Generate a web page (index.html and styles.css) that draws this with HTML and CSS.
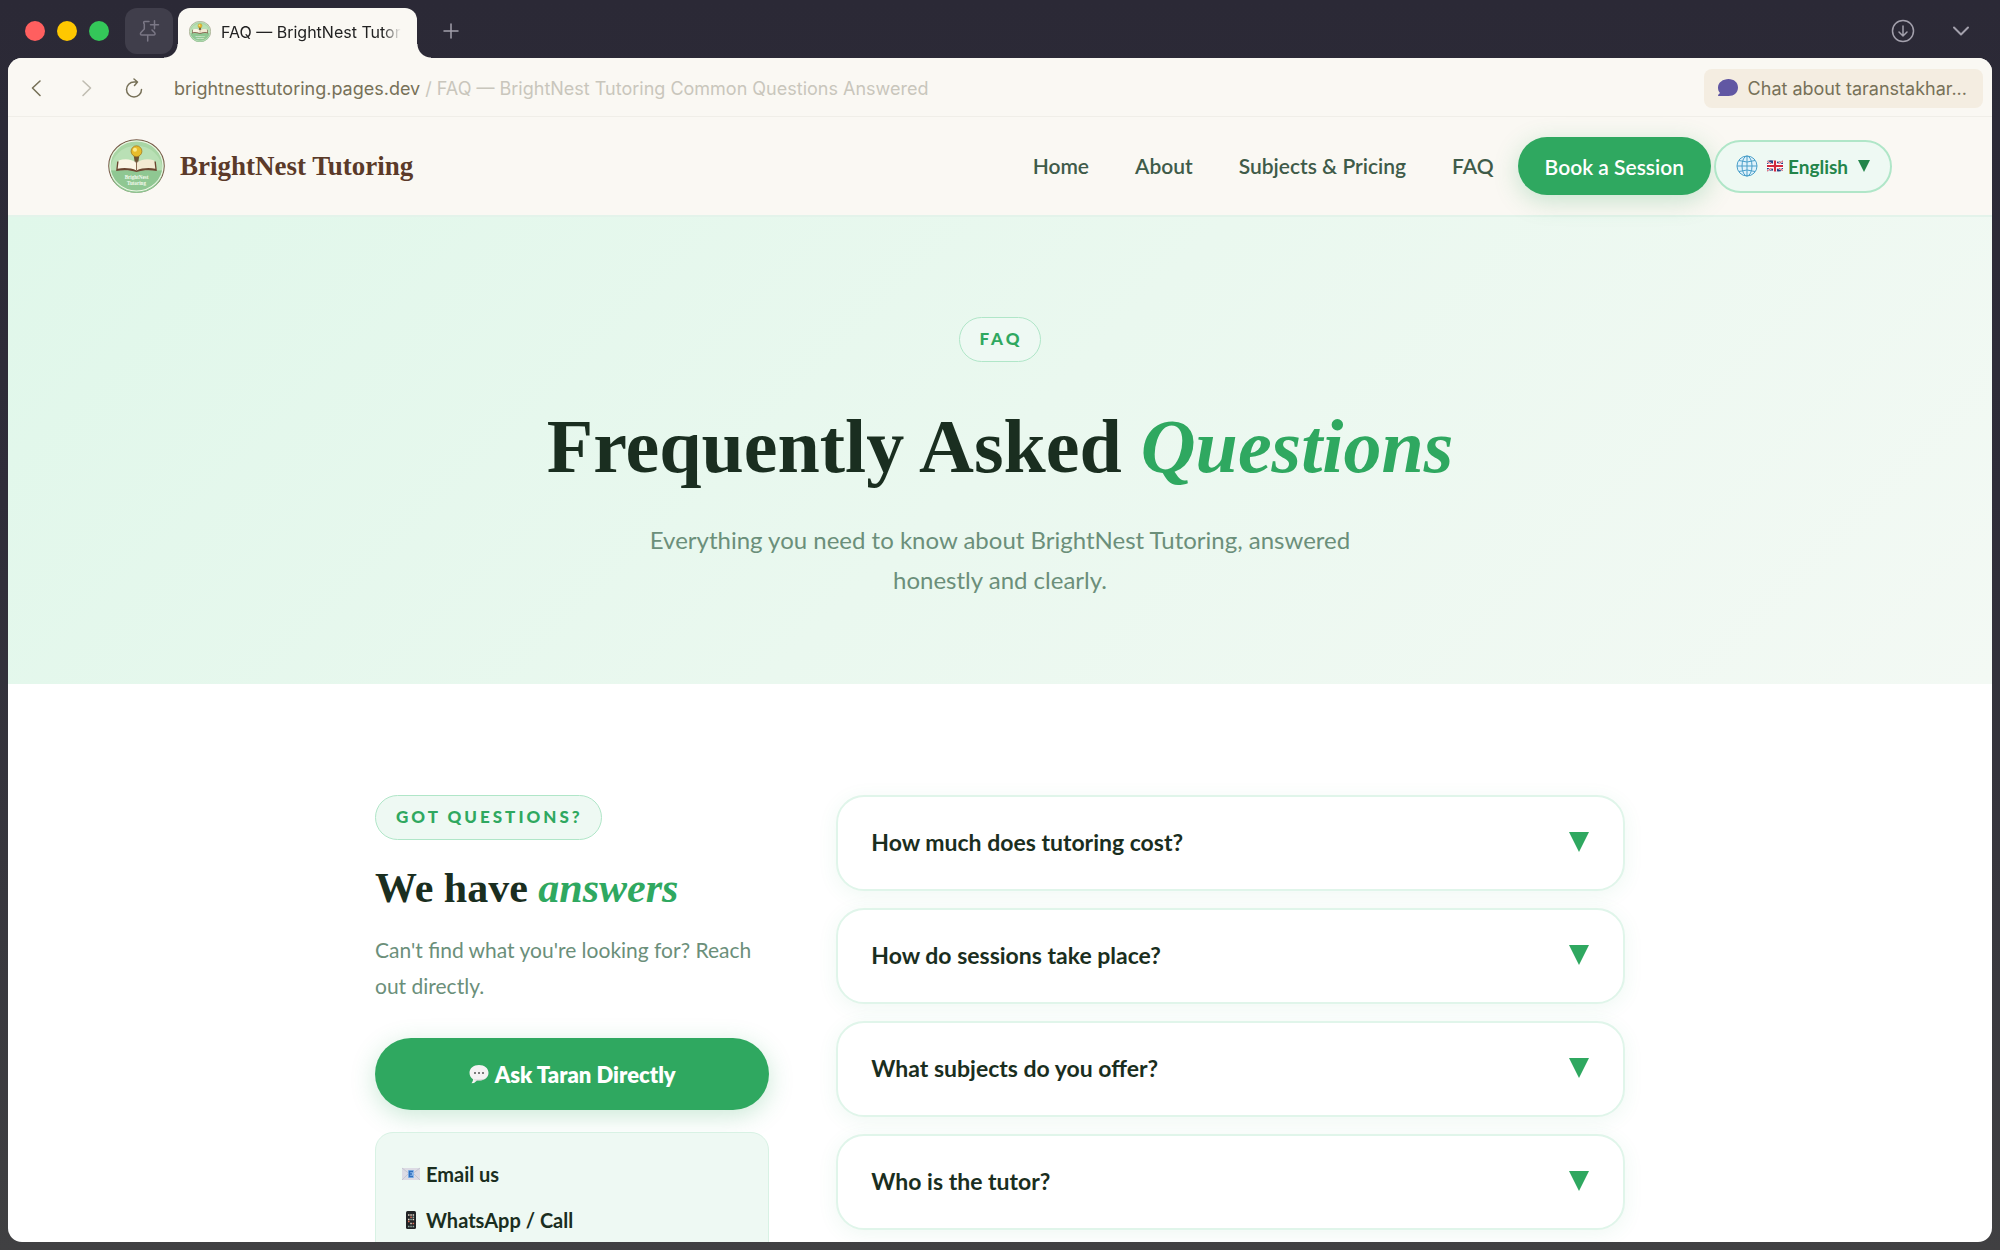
FILE: index.html
```html
<!DOCTYPE html>
<html lang="en">
<head>
    <meta charset="UTF-8">
    <meta name="viewport" content="width=device-width, initial-scale=1.0">
    <title>FAQ — BrightNest Tutoring Common Questions Answered</title>
    <link rel="stylesheet" href="styles.css">
</head>
<body>
    <!-- shared logo drawing -->
    <svg class="defs" aria-hidden="true">
        <symbol id="logo" viewBox="0 0 56 53">
            <ellipse cx="28" cy="26.500" rx="28" ry="26.500" fill="#fff"/>
            <ellipse cx="28" cy="26.500" rx="27.300" ry="25.800" fill="#a9d6a5" stroke="#7a5a48" stroke-width="1"/>
            <path d="M2.500 31a25.500 24.500 0 1 1 51 0z" fill="#b9e0b5"/>
            <path d="M2.500 31h51a25.500 22 0 0 1-51 0z" fill="#8fc792"/>
            <ellipse cx="28" cy="26.500" rx="26" ry="24.500" fill="none" stroke="#eef6e6" stroke-width="1"/>
            <path d="M9 22l-1 9.500c7-1.500 14-1 20 .8 6-1.800 13-2.300 20-.8L47 22z" fill="#6b4630"/>
            <path d="M10.500 21c6-2 13-1.500 17.500 2.500V31c-5-2.500-12-3-18.500-1.800z" fill="#fbf5e4"/>
            <path d="M45.500 21c-6-2-13-1.500-17.500 2.500V31c5-2.500 12-3 18.500-1.800z" fill="#f3ead2"/>
            <path d="M28 23.500V31" stroke="#8a6a50" stroke-width="1"/>
            <path d="M25 15h6l-1 6-2 2-2-2z" fill="#6e5334"/>
            <circle cx="28" cy="12" r="5.300" fill="#e8bd2c" stroke="#a57d1f" stroke-width=".8"/>
            <circle cx="26.500" cy="10.500" r="2" fill="#fbe98a"/>
            <text class="logo-text" x="28" y="39.500">BrightNest</text>
            <text class="logo-text" x="28" y="44.800">Tutoring</text>
        </symbol>
    </svg>

    <header class="tab-bar">
        <div class="lights">
            <button class="light red" aria-label="Close"></button>
            <button class="light yellow" aria-label="Minimize"></button>
            <button class="light green" aria-label="Zoom"></button>
        </div>
        <button class="pin-btn" aria-label="Pin tab">
            <svg width="22" height="22" viewBox="0 0 22 22" fill="none" stroke="#7a7785" stroke-width="1.500" stroke-linecap="round" stroke-linejoin="round">
                <path d="M11 1.500H7C5.300 1.500 5.300 3 6.300 4V9L3 12.500C2 13.800 2.300 15 4 15H15.500C17.200 15 17.500 13.800 16.500 12.500L14 10M9.700 15V21M16.500 .8v8M12.500 4.800h8"/>
            </svg>
        </button>
        <div class="tab">
            <svg class="favicon"><use href="#logo"/></svg>
            <span class="tab-title">FAQ — BrightNest Tutoring</span>
        </div>
        <button class="icon-btn new-tab" aria-label="New tab">
            <svg width="16" height="16" viewBox="0 0 16 16" fill="none" stroke="#a3a0ac" stroke-width="1.500" stroke-linecap="round"><path d="M8 1v14M1 8h14"/></svg>
        </button>
        <div class="tab-tools">
            <button class="icon-btn" aria-label="Downloads">
                <svg width="24" height="24" viewBox="0 0 24 24" fill="none" stroke="#a3a0ac" stroke-width="1.500" stroke-linecap="round" stroke-linejoin="round"><circle cx="12" cy="12" r="10.500"/><path d="M12 7v10M8 13l4 4 4-4"/></svg>
            </button>
            <button class="icon-btn" aria-label="All tabs">
                <svg width="18" height="12" viewBox="0 0 18 12" fill="none" stroke="#a3a0ac" stroke-width="2" stroke-linecap="round" stroke-linejoin="round"><path d="M2 2.500l7 7 7-7"/></svg>
            </button>
        </div>
    </header>

    <div class="window">
        <div class="toolbar">
            <div class="history">
                <button class="icon-btn" aria-label="Back">
                    <svg width="18" height="18" viewBox="0 0 18 18" fill="none" stroke="#777158" stroke-width="1.600" stroke-linecap="round" stroke-linejoin="round"><path d="M13 2L5.500 9l7.500 7.500"/></svg>
                </button>
                <button class="icon-btn" aria-label="Forward">
                    <svg width="18" height="18" viewBox="0 0 18 18" fill="none" stroke="#c0bdb2" stroke-width="1.600" stroke-linecap="round" stroke-linejoin="round"><path d="M7 2l7.500 7L7 16.500"/></svg>
                </button>
                <button class="icon-btn" aria-label="Reload">
                    <svg width="18" height="20" viewBox="0 0 18 20" fill="none" stroke="#777158" stroke-width="1.500" stroke-linecap="round" stroke-linejoin="round"><path d="M16.500 11.500A7.500 7.500 0 1 1 9 4h3M9 1l3.500 3L9.500 7.500"/></svg>
                </button>
            </div>
            <div class="address">brightnesttutoring.pages.dev <span class="address-title">/ FAQ — BrightNest Tutoring Common Questions Answered</span></div>
            <button class="chat-btn">
                <svg width="22" height="20" viewBox="0 0 22 20" fill="#6157a3"><path d="M11.500 1C17 1 21 4.500 21 9.500S17 18 11.500 18H2c-1.200 0-1.200-1-.5-1.600L3 15C1.500 13.500 1 11.500 1 9.500 1 4.500 6 1 11.500 1z"/></svg>
                Chat about taranstakhar...
            </button>
        </div>

        <nav class="navbar">
            <a class="brand" href="#">
                <svg class="brand-logo"><use href="#logo"/></svg>
                BrightNest Tutoring
            </a>
            <div class="nav-links">
                <a href="#">Home</a>
                <a href="#">About</a>
                <a href="#">Subjects &amp; Pricing</a>
                <a href="#">FAQ</a>
            </div>
            <a class="btn btn-nav" href="#">Book a Session</a>
            <div class="lang">
                <svg width="22" height="22" viewBox="0 0 22 22" fill="#dff2fb" stroke="#4a9fc9" stroke-width="1"><circle cx="11" cy="11" r="10"/><ellipse cx="11" cy="11" rx="5" ry="10" fill="none"/><path d="M11 1v20M1 11h20M3 5.500q8 3 16 0M3 16.500q8-3 16 0" fill="none"/></svg>
                <svg class="flag" width="16" height="12" viewBox="0 0 16 12"><path fill="#283c80" d="M0 1q4-1.500 8 0t8-.5v10q-4 1.500-8 .5t-8 .5z"/><path d="M0 1.500l16 9M0 11L16 1" stroke="#fff" stroke-width="2"/><path d="M0 1.500l16 9M0 11L16 1" stroke="#d2283c" stroke-width=".8"/><path d="M8 .5v11M0 6h16" stroke="#fff" stroke-width="4"/><path d="M8 .5v11M0 6h16" stroke="#d2283c" stroke-width="2.200"/></svg>
                <select aria-label="Language">
                    <option>English</option>
                </select>
                <svg width="12" height="12" viewBox="0 0 12 12" fill="#23854a"><path d="M0 0h12L6 12z"/></svg>
            </div>
        </nav>

        <section class="hero">
            <span class="badge">FAQ</span>
            <h1>Frequently Asked <em>Questions</em></h1>
            <p>Everything you need to know about BrightNest Tutoring, answered honestly and clearly.</p>
        </section>

        <main class="faq-section">
            <aside class="faq-side">
                <span class="badge">GOT QUESTIONS?</span>
                <h2>We have <em>answers</em></h2>
                <p>Can't find what you're looking for? Reach out directly.</p>
                <a class="btn btn-ask" href="#">
                    <svg width="20" height="20" viewBox="0 0 20 20"><path d="M10 1c5.500 0 9.500 3.200 9.500 7.800s-4 7.800-9.500 7.800q-1 0-2-.2-2 2.600-5.500 2.800 1.800-1.600 1.500-4C1.800 13.700.5 11.500.5 8.800.5 4.200 4.500 1 10 1z" fill="#f4f2f3"/><path d="M4 15.200q2.500 1.400 6 1.400 4 0 6.500-1.800-3 1-6.500 1-3.500 0-6-.6z" fill="#bdbabd"/><circle cx="6" cy="9" r="1" fill="#555"/><circle cx="10" cy="9" r="1" fill="#555"/><circle cx="14" cy="9" r="1" fill="#555"/></svg>
                    Ask Taran Directly
                </a>
                <div class="contact-card">
                    <a href="#">
                        <svg width="18" height="18" viewBox="0 0 18 18"><path d="M0 3h18v12H0z" fill="#dcdbe4"/><path d="M0 3l9 7 9-7M0 15l6-6M18 15l-6-6" fill="none" stroke="#bfc0cc" stroke-width=".8"/><path d="M6 5h6v8H6z" fill="#8fb9ea"/><path d="M11 6.500H7.500v5H11M7.500 9H10" fill="none" stroke="#2f6fbe" stroke-width="1.400"/></svg>
                        Email us
                    </a>
                    <a href="#">
                        <svg width="18" height="18" viewBox="0 0 18 18"><rect x="4" y="0" width="10" height="18" rx="1.500" fill="#222426"/><path d="M6 4h1.500M8.300 4h1.500M10.600 4h1.500M6 8.500h1.500M10.600 8.500h1.500M8.300 12.500h1.500" stroke="#e7dccb" stroke-width="1.500"/><path d="M8.300 6.300h1.500M6 10.500h1.500M10.600 12.500h1.500" stroke="#e2705a" stroke-width="1.500"/><path d="M8.300 8.500h1.500M10.600 6.300h1.500M6 15.500h1.500M8.300 15.500h1.500M10.600 15.500h1.500" stroke="#8fa9a0" stroke-width="1.500"/></svg>
                        WhatsApp / Call
                    </a>
                </div>
            </aside>
            <div class="faq-list">
                <button class="faq-item">How much does tutoring cost? <svg class="arrow" viewBox="0 0 20 20"><path d="M0 0h20L10 20z"/></svg></button>
                <button class="faq-item">How do sessions take place? <svg class="arrow" viewBox="0 0 20 20"><path d="M0 0h20L10 20z"/></svg></button>
                <button class="faq-item">What subjects do you offer? <svg class="arrow" viewBox="0 0 20 20"><path d="M0 0h20L10 20z"/></svg></button>
                <button class="faq-item">Who is the tutor? <svg class="arrow" viewBox="0 0 20 20"><path d="M0 0h20L10 20z"/></svg></button>
            </div>
        </main>
    </div>
</body>
</html>
```
FILE: styles.css
```css
* {
    box-sizing: border-box;
    margin: 0;
    padding: 0;
}

body {
    font-family: Lato, "Open Sans", sans-serif;
    height: 100vh;
    display: flex;
    flex-direction: column;
    background: linear-gradient(#2b2936, #2f2d39 40%, #404042);
    color: #1a2e20;
    overflow: hidden;
}

button {
    font: inherit;
    color: inherit;
    background: none;
    border: none;
    cursor: pointer;
}

a {
    color: inherit;
    text-decoration: none;
}

svg {
    flex-shrink: 0;
}

.defs {
    position: absolute;
    width: 0;
    height: 0;
}

.logo-text {
    font: bold 5px "Liberation Serif", serif;
    fill: #f4faef;
    text-anchor: middle;
}

/* browser tabs */
.tab-bar {
    display: flex;
    align-items: flex-start;
    height: 58px;
    padding: 8px 27px 0 25px;
    font-family: Inter, sans-serif;
}

.lights {
    display: flex;
    gap: 12px;
    padding-top: 13px;
    margin-right: 16px;
}

.light {
    width: 20px;
    height: 20px;
    border-radius: 50%;
}

.red { background-color: #ff5f5f; }
.yellow { background-color: #fec700; }
.green { background-color: #34c759; }

.pin-btn {
    display: flex;
    align-items: center;
    justify-content: center;
    width: 48px;
    height: 46px;
    margin-right: 5px;
    border-radius: 12px;
    background-color: #403e4b;
}

.tab {
    position: relative;
    display: flex;
    align-items: center;
    gap: 10px;
    width: 239px;
    height: 50px;
    padding: 0 16px 3px 11px;
    border-radius: 12px 12px 0 0;
    background-color: #faf8f3;
}

/* curved feet of the active tab */
.tab::before,
.tab::after {
    content: "";
    position: absolute;
    bottom: 0;
    width: 14px;
    height: 14px;
}

.tab::before {
    right: 100%;
    background: radial-gradient(circle at 0 0, transparent 13px, #faf8f3 14px);
}

.tab::after {
    left: 100%;
    background: radial-gradient(circle at 100% 0, transparent 13px, #faf8f3 14px);
}

.favicon {
    width: 22px;
    height: 21px;
}

.tab-title {
    flex: 1;
    overflow: hidden;
    white-space: nowrap;
    font-size: 16px;
    color: #222;
    mask-image: linear-gradient(90deg, #000 90%, transparent);
}

.icon-btn {
    display: flex;
    align-items: center;
    justify-content: center;
    min-width: 24px;
    height: 24px;
}

.new-tab {
    margin: 11px 0 0 22px;
}

.tab-tools {
    display: flex;
    gap: 34px;
    margin-left: auto;
    padding-top: 11px;
}

/* page window */
.window {
    flex: 1;
    min-height: 0;
    margin: 0 8px 8px;
    border-radius: 14px;
    background-color: #fff;
    overflow: hidden;
}

.toolbar {
    display: flex;
    align-items: center;
    height: 59px;
    padding: 2px 9px 0 16px;
    background-color: #faf8f3;
    border-bottom: 1px solid #f0eee8;
    font-family: Inter, sans-serif;
    font-size: 18px;
}

.history {
    display: flex;
    gap: 25px;
    margin-right: 28px;
}

.address {
    flex: 1;
    color: #777158;
    white-space: nowrap;
}

.address-title {
    color: #c9c6bc;
}

.chat-btn {
    display: flex;
    align-items: center;
    gap: 9px;
    height: 39px;
    padding: 0 16px 0 13px;
    border-radius: 8px;
    background-color: #f4ede1;
    color: #777158;
}

.navbar {
    display: flex;
    align-items: center;
    height: 100px;
    padding: 0 100px;
    background-color: #faf8f3;
    border-bottom: 2px solid #e3f3ea;
}

.brand {
    display: flex;
    align-items: center;
    gap: 15px;
    font-family: "Liberation Serif", serif;
    font-size: 27px;
    font-weight: 700;
    color: #5b3a29;
}

.brand-logo {
    width: 57px;
    height: 54px;
}

.nav-links {
    display: flex;
    gap: 46px;
    margin-left: auto;
    margin-right: 24px;
    font-size: 21px;
    font-weight: 600;
    line-height: 28px;
    color: #3f5b49;
}

.btn {
    display: flex;
    align-items: center;
    justify-content: center;
    border-radius: 40px;
    background-color: #2fa860;
    color: #fff;
    font-weight: 700;
    box-shadow: 0 6px 24px rgba(47, 168, 96, 0.25);
}

.btn-nav {
    height: 58px;
    padding: 0 27px;
    margin-right: 3px;
    font-size: 21px;
    font-weight: 600;
}

.lang {
    display: flex;
    align-items: center;
    height: 53px;
    padding: 0 20px;
    border: 2px solid #b0e6c8;
    border-radius: 27px;
    background-color: #eef9f3;
}

.flag {
    margin: 0 5px 0 9px;
}

.lang select {
    appearance: none;
    margin-right: 9px;
    border: none;
    background: none;
    font: 700 19px Lato, "Open Sans", sans-serif;
    color: #23854a;
}

.hero {
    display: flex;
    flex-direction: column;
    align-items: center;
    padding: 100px 20px 84px;
    background: linear-gradient(135deg, #e0f7ea, #eaf8ef 50%, #f3f9f4);
    text-align: center;
}

.badge {
    height: 45px;
    padding: 0 18px 0 20px;
    border: 1px solid #b0e6c8;
    border-radius: 24px;
    background-color: #eef9f3;
    color: #2fa860;
    font-size: 17px;
    font-weight: 900;
    line-height: 42px;
    letter-spacing: 3px;
}

h1,
h2 {
    font-family: "Liberation Serif", serif;
    font-weight: 700;
}

em {
    color: #2fa860;
}

h1 {
    margin: 42px 0 32px;
    font-size: 76px;
    line-height: 84px;
}

.hero p {
    max-width: 740px;
    font-size: 24px;
    line-height: 40px;
    color: #6b8f7a;
}

.faq-section {
    display: grid;
    grid-template-columns: 1fr 2fr;
    gap: 67px;
    max-width: 1250px;
    margin: 0 auto;
    padding: 111px 0;
}

.faq-side {
    display: flex;
    flex-direction: column;
    align-items: flex-start;
}

h2 {
    margin: 24px 0 20px;
    font-size: 42px;
    line-height: 48px;
}

.faq-side p {
    margin-bottom: 34px;
    font-size: 21px;
    line-height: 36px;
    color: #6b8f7a;
}

.btn-ask {
    gap: 6px;
    width: 100%;
    height: 72px;
    margin-bottom: 22px;
    font-size: 22px;
    font-weight: 800;
}

.contact-card {
    display: flex;
    flex-direction: column;
    gap: 18px;
    width: 100%;
    padding: 27px 26px;
    border: 1px solid #d8f2e4;
    border-radius: 18px;
    background-color: #eef9f3;
    font-size: 20px;
    font-weight: 700;
    line-height: 28px;
}

.contact-card a {
    display: flex;
    align-items: center;
    gap: 6px;
}

.faq-list {
    display: flex;
    flex-direction: column;
    gap: 17px;
}

.faq-item {
    display: flex;
    align-items: center;
    justify-content: space-between;
    height: 96px;
    padding: 0 34px 3px 33px;
    border: 2px solid #e0f5ea;
    border-radius: 28px;
    background-color: #fff;
    font-size: 23px;
    font-weight: 700;
    box-shadow: 0 4px 20px rgba(47, 168, 96, 0.08);
}

.arrow {
    width: 20px;
    height: 20px;
    fill: #2fa860;
}
```
